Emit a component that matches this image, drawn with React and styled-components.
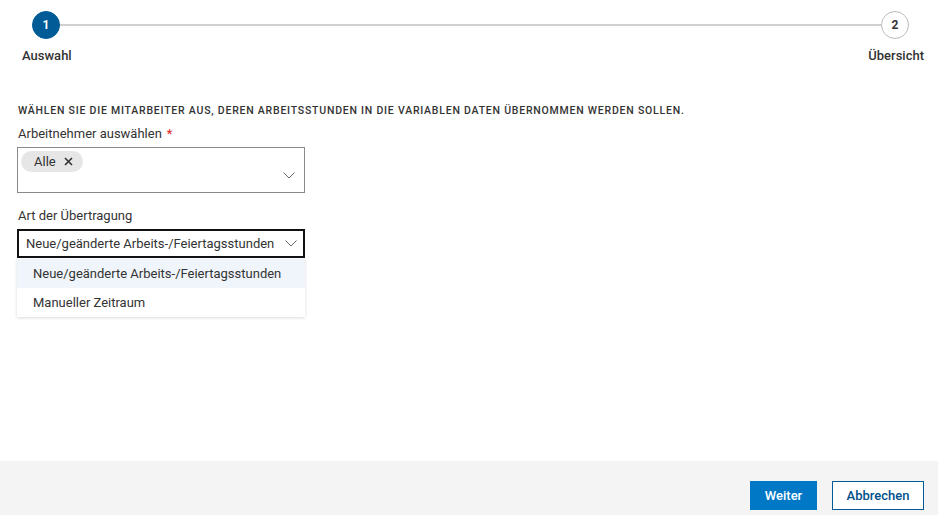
import React from 'react';
import styled, { createGlobalStyle } from 'styled-components';

const GlobalStyle = createGlobalStyle`
  html, body {
    margin: 0;
    padding: 0;
    background: #fff;
    font-family: Roboto, "Liberation Sans", sans-serif;
    color: #333;
  }
`

const Page = styled.div`
  display: flex;
  flex-direction: column;
  height: 100vh;
`
const Content = styled.main`
  flex: 1;
  padding: 11px 14px 0 17px;
`
const Track = styled.div`
  display: flex;
  align-items: center;
  padding: 0 15px 0 15px;
`
const Circle = styled.div`
  width: 28px;
  height: 28px;
  box-sizing: border-box;
  border-radius: 50%;
  display: flex;
  align-items: center;
  justify-content: center;
  font-size: 12px;
  font-weight: 700;
  background: ${p => (p.$active ? '#005b97' : '#fff')};
  color: ${p => (p.$active ? '#fff' : '#333')};
  border: 1px solid ${p => (p.$active ? '#005b97' : '#bbb')};
`
const Line = styled.div`
  flex: 1;
  height: 2px;
  background: #d0d0d0;
`
const Labels = styled.div`
  display: flex;
  justify-content: space-between;
  margin-top: 9px;
  padding-left: 5px;
`
const StepLabel = styled.div`
  font-size: 13px;
  font-weight: 500;
  color: #333;
`
const Heading = styled.h2`
  margin: 41px 0 0 1px;
  font-size: 10.5px;
  font-weight: 500;
  letter-spacing: 0.78px;
  text-transform: uppercase;
  color: #333;
`
const Label = styled.label`
  display: block;
  font-size: 13px;
  color: #333;
  margin: ${p => p.$top || '11px'} 0 6px 1px;
`
const Star = styled.span`
  color: #d22;
  margin-left: 5px;
`
const Field = styled.div`
  width: 288px;
  box-sizing: border-box;
  position: relative;
`
const MultiBox = styled.div`
  height: 46px;
  box-sizing: border-box;
  border: 1px solid #8a8a8a;
  padding: 3px;
  position: relative;
`
const Chip = styled.span`
  display: inline-flex;
  align-items: center;
  gap: 8px;
  height: 21px;
  padding: 0 10px 0 13px;
  border-radius: 11px;
  background: #e6e6e6;
  font-size: 13px;
  color: #333;
`
const Chevron = styled.svg`
  position: absolute;
  right: ${p => p.$right || '9px'};
  top: ${p => p.$top || '24px'};
`
const SelectBox = styled.div`
  height: 29px;
  box-sizing: border-box;
  border: 2px solid #111;
  padding: 0 7px;
  display: flex;
  align-items: center;
  font-size: 13px;
  color: #333;
  position: relative;
`
const Menu = styled.ul`
  list-style: none;
  margin: 1px 0 0;
  padding: 0;
  background: #fff;
  box-shadow: 0 1px 3px rgba(0, 0, 0, 0.15);
`
const Option = styled.li`
  height: 29px;
  display: flex;
  align-items: center;
  padding-left: 16px;
  font-size: 13px;
  color: #333;
  background: ${p => (p.$active ? '#f0f5fb' : '#fff')};
`
const Footer = styled.footer`
  height: 54px;
  background: #f4f4f4;
  display: flex;
  justify-content: flex-end;
  align-items: flex-start;
  gap: 15px;
  padding: 20px 14px 0 0;
  box-sizing: border-box;
`
const Button = styled.button`
  height: 29px;
  width: ${p => (p.$primary ? '67px' : '92px')};
  padding: 0;
  font-family: inherit;
  font-size: 13px;
  font-weight: 500;
  border: 1px solid;
  background: ${p => (p.$primary ? '#0078c6' : '#fff')};
  border-color: ${p => (p.$primary ? '#0078c6' : '#005b97')};
  color: ${p => (p.$primary ? '#fff' : '#00508a')};
  cursor: pointer;
`

const ChevronIcon = (props) => (
  <Chevron width="12" height="7" viewBox="0 0 12 7" {...props}>
    <path d="M0.5 0.5 L6 6 L11.5 0.5" fill="none" stroke="#666" strokeWidth="1" />
  </Chevron>
)

export default function App() {
  return (
    <Page>
      <GlobalStyle />
      <Content>
        <Track>
          <Circle $active>1</Circle>
          <Line />
          <Circle>2</Circle>
        </Track>
        <Labels>
          <StepLabel>Auswahl</StepLabel>
          <StepLabel>Übersicht</StepLabel>
        </Labels>

        <Heading>Wählen Sie die Mitarbeiter aus, deren Arbeitsstunden in die variablen Daten übernommen werden sollen.</Heading>

        <Label $top="9px">Arbeitnehmer auswählen<Star>*</Star></Label>
        <Field>
          <MultiBox>
            <Chip>
              Alle
              <svg width="9" height="9" viewBox="0 0 9 9">
                <path d="M1 1 L8 8 M8 1 L1 8" stroke="#333" strokeWidth="1.6" />
              </svg>
            </Chip>
            <ChevronIcon />
          </MultiBox>
        </Field>

        <Label $top="15px">Art der Übertragung</Label>
        <Field>
          <SelectBox>
            Neue/geänderte Arbeits-/Feiertagsstunden
            <ChevronIcon $top="9px" $right="6px" />
          </SelectBox>
          <Menu>
            <Option $active>Neue/geänderte Arbeits-/Feiertagsstunden</Option>
            <Option>Manueller Zeitraum</Option>
          </Menu>
        </Field>
      </Content>
      <Footer>
        <Button $primary>Weiter</Button>
        <Button>Abbrechen</Button>
      </Footer>
    </Page>
  );
}
